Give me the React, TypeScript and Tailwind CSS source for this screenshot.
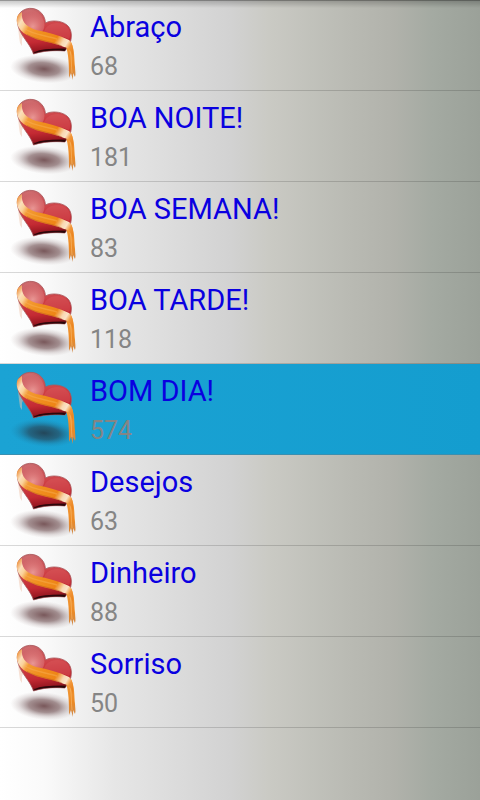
import { useId, useState } from 'react';
import clsx from 'clsx';

interface Category {
    name: string;
    count: number;
}

const categories: Category[] = [
    { name: 'Abraço', count: 68 },
    { name: 'BOA NOITE!', count: 181 },
    { name: 'BOA SEMANA!', count: 83 },
    { name: 'BOA TARDE!', count: 118 },
    { name: 'BOM DIA!', count: 574 },
    { name: 'Desejos', count: 63 },
    { name: 'Dinheiro', count: 88 },
    { name: 'Sorriso', count: 50 },
];

function HeartIcon({ active }: { active: boolean }) {
    const id = useId();

    return (
        <svg viewBox="10 0 72 90" className="h-[90px] w-[72px] shrink-0" aria-hidden="true">
            <defs>
                <linearGradient id={`${id}body`} x1="0.35" y1="0" x2="0.5" y2="1">
                    <stop offset="0" stopColor="#c9686b" />
                    <stop offset="0.4" stopColor="#cf4247" />
                    <stop offset="0.72" stopColor="#c42a33" />
                    <stop offset="0.9" stopColor="#9a1822" />
                    <stop offset="1" stopColor="#1c0507" />
                </linearGradient>
                <radialGradient id={`${id}shine`} cx="0.5" cy="0.75" r="0.65">
                    <stop offset="0" stopColor="#eda6a2" stopOpacity="0.85" />
                    <stop offset="1" stopColor="#d9777a" stopOpacity="0.3" />
                </radialGradient>
                <linearGradient id={`${id}ribbon`} gradientUnits="userSpaceOnUse" x1="18" y1="16" x2="74" y2="50">
                    <stop offset="0" stopColor="#ef9a4c" />
                    <stop offset="0.08" stopColor="#fbe0bc" />
                    <stop offset="0.15" stopColor="#fbd29a" />
                    <stop offset="0.23" stopColor="#f39a36" />
                    <stop offset="0.42" stopColor="#f0901f" />
                    <stop offset="0.68" stopColor="#ee8516" />
                    <stop offset="0.79" stopColor="#f9d8b0" />
                    <stop offset="0.85" stopColor="#fae3c8" />
                    <stop offset="0.92" stopColor="#f2973a" />
                    <stop offset="1" stopColor="#ea8420" />
                </linearGradient>
                <linearGradient id={`${id}tail`} x1="0" y1="0" x2="0" y2="1">
                    <stop offset="0" stopColor="#f5a040" />
                    <stop offset="0.6" stopColor="#ec8a24" />
                    <stop offset="1" stopColor="#cf8a4c" />
                </linearGradient>
                <radialGradient id={`${id}shadow`}>
                    <stop offset="0" stopColor={active ? '#243c4c' : '#6a4548'} stopOpacity="0.9" />
                    <stop offset="0.45" stopColor={active ? '#274a5e' : '#7d6062'} stopOpacity="0.7" />
                    <stop offset="0.75" stopColor={active ? '#22607e' : '#958082'} stopOpacity="0.25" />
                    <stop offset="1" stopColor={active ? '#1b7fa8' : '#b0a0a0'} stopOpacity="0" />
                </radialGradient>
            </defs>
            <ellipse cx="44" cy="69" rx="34" ry="14" fill={`url(#${id}shadow)`} transform="rotate(5 44 69)" />
            <path d="M18 27 L19 36 L20 43 L22 46 L22 39 L24 34Z" fill="#f1c3ac" opacity="0.5" />
            <path
                d="M33.500 54 C31 46 24 39 20 31 C15 21 17 12 26 9 C36 6 45 13 45.500 23 C50 20 61 20 67 25 C73 30 72 40 69 45 L65 51 C54 50 42 51 33.500 54Z"
                fill={`url(#${id}body)`}
                stroke="#a8585c"
                strokeWidth="0.8"
            />
            <path d="M22 23 C20 16 22 11 28 10 C37 9 44 16 44.500 25 C44 29 43 31 42 32 C33 31 26 29 22 23Z" fill={`url(#${id}shine)`} />
            <path d="M44 32 C45 27 50 23 57 23 C65 23 70 28 70 33 C70 36 70 38 69 39 C60 35 51 36 44 32Z" fill="#df686b" opacity="0.3" />
            <path d="M33 53.500 C38 49 50 48.500 66 49 L64.500 51 C52 50 42 51 33 53.500Z" fill="#210507" opacity="0.85" />
            <path d="M65 43 L71 42 C75 50 74 59 75 67 C75 71 76 74 75 77 L73 73 L73 80 L71 73 L69 78 C69 66 69 54 65 43Z" fill={`url(#${id}tail)`} />
            <path d="M70 50 C72 58 71 66 72 73" fill="none" stroke="#f8bc70" strokeWidth="0.6" />
            <path
                d="M22 12 C21 21 25 26 36 30 C48 32 58 35 69 40 C73 43 74 51 73 58 C72 52 70 48 64 47 C52 42 40 42 27 35 C17 30 15 20 18 15Z"
                fill={`url(#${id}ribbon)`}
            />
            <path d="M25 29 C34 35 45 35 57 39" fill="none" stroke="#f9b65c" strokeWidth="1.500" opacity="0.4" />
            <path d="M27 34.500 C39 41 51 41 62 46" fill="none" stroke="#b0501b" strokeWidth="0.8" opacity="0.5" />
        </svg>
    );
}

export default function App() {
    const [selected, setSelected] = useState('BOM DIA!');

    return (
        <main className="min-h-screen bg-[linear-gradient(to_right,#ffffff_0%,#fafafa_9%,#e6e6e6_24%,#d2d2d2_48%,#cacac4_56%,#b9bab3_73%,#b1b2ab_82%,#a4aaa2_90%,#9ba199_100%)] font-[Roboto,sans-serif]">
            <div className="pointer-events-none absolute inset-x-0 top-0 h-2 border-t border-black/40 bg-linear-to-b from-black/20 to-transparent" />
            <ul>
                {categories.map((category) => {
                    const active = category.name === selected;

                    return (
                        <li key={category.name}>
                            <button
                                type="button"
                                onClick={() => setSelected(category.name)}
                                className={clsx(
                                    'flex w-full items-center border-b pl-[10px] text-left',
                                    active
                                        ? 'border-[#3a8fb0] bg-linear-to-r from-[#1ba3d4] to-[#149dcf]'
                                        : 'border-black/15',
                                )}
                            >
                                <HeartIcon active={active} />
                                <span className="flex flex-col pl-2">
                                    <span className="text-[29px] leading-[44px] text-[#0a00e0]">{category.name}</span>
                                    <span className="text-[25px] leading-[36px] text-[#858585]">{category.count}</span>
                                </span>
                            </button>
                        </li>
                    );
                })}
            </ul>
        </main>
    );
}
